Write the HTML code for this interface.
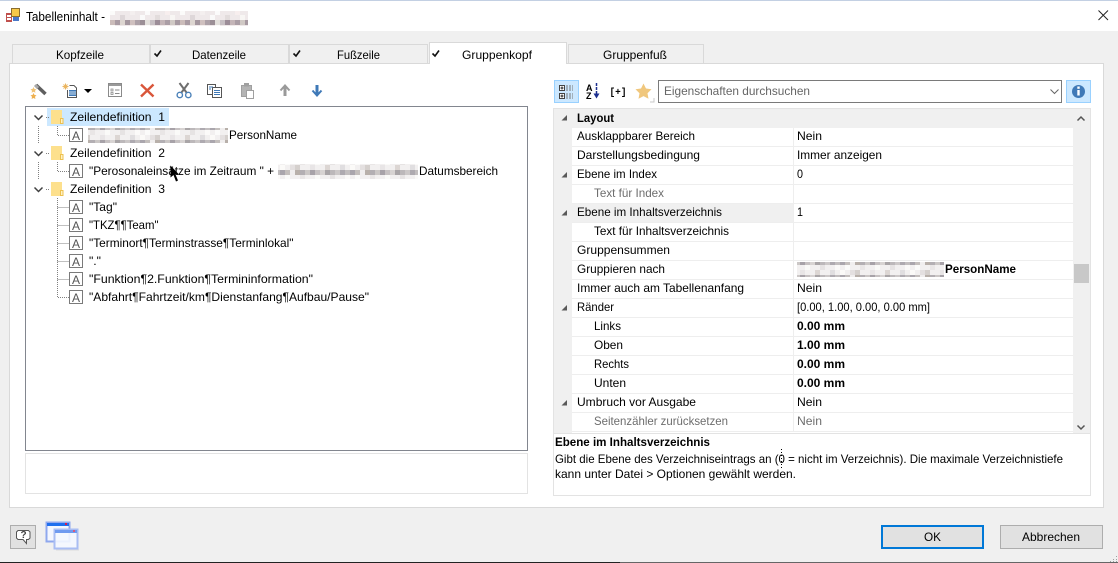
<!DOCTYPE html>
<html lang="de"><head><meta charset="utf-8"><title>Tabelleninhalt</title>
<style>
html,body{margin:0;padding:0;background:#f0f0f0;width:1118px;height:563px;overflow:hidden}
svg{display:block}
text{font-family:"Liberation Sans",sans-serif;font-size:12px;fill:#000}
.b{font-weight:bold}
.g{fill:#6d6d6d}
.t{font-size:13px}
</style></head><body>
<svg xmlns="http://www.w3.org/2000/svg" width="1118" height="563" viewBox="0 0 1118 563">
<defs>
<pattern id="mz" width="70" height="15" patternUnits="userSpaceOnUse">
<rect width="70" height="15" fill="#f2f0f0"/>
<rect x="0" y="0" width="5" height="5" fill="#fbfaf8"/><rect x="10" y="0" width="5" height="5" fill="#e4e0e0"/><rect x="15" y="0" width="5" height="5" fill="#d5d0cd"/><rect x="30" y="0" width="5" height="5" fill="#e8e5e6"/><rect x="45" y="0" width="5" height="5" fill="#dcd6d3"/><rect x="60" y="0" width="5" height="5" fill="#e0dee0"/>
<rect x="0" y="5" width="5" height="5" fill="#aaa6ad"/><rect x="5" y="5" width="5" height="5" fill="#c4bfbd"/><rect x="10" y="5" width="5" height="5" fill="#f0eeee"/><rect x="15" y="5" width="5" height="5" fill="#b8b0aa"/><rect x="20" y="5" width="5" height="5" fill="#b3afb3"/><rect x="25" y="5" width="5" height="5" fill="#cbc7c6"/><rect x="30" y="5" width="5" height="5" fill="#a7a2a8"/><rect x="35" y="5" width="5" height="5" fill="#c6c1c2"/><rect x="40" y="5" width="5" height="5" fill="#d7d3d2"/><rect x="45" y="5" width="5" height="5" fill="#a9a5a7"/><rect x="50" y="5" width="5" height="5" fill="#bcb8ba"/><rect x="55" y="5" width="5" height="5" fill="#ccc8c8"/><rect x="60" y="5" width="5" height="5" fill="#aeaab0"/><rect x="65" y="5" width="5" height="5" fill="#c2bebf"/>
<rect x="5" y="10" width="5" height="5" fill="#fbfbfa"/><rect x="20" y="10" width="5" height="5" fill="#e9e6e6"/><rect x="35" y="10" width="5" height="5" fill="#fafaf8"/><rect x="50" y="10" width="5" height="5" fill="#e6e3e3"/><rect x="65" y="10" width="5" height="5" fill="#fbfaf9"/>
</pattern>
<pattern id="mt" width="70" height="15" patternUnits="userSpaceOnUse">
<rect width="70" height="15" fill="#efe9ea"/>
<rect x="0" y="0" width="5" height="5" fill="#fafafa"/><rect x="15" y="0" width="5" height="5" fill="#e2dcdc"/><rect x="30" y="0" width="5" height="5" fill="#f8f6f4"/><rect x="50" y="0" width="5" height="5" fill="#ded7d9"/>
<rect x="0" y="5" width="5" height="5" fill="#9b8f96"/><rect x="5" y="5" width="5" height="5" fill="#e3e0dc"/><rect x="10" y="5" width="5" height="5" fill="#c7c0c4"/><rect x="15" y="5" width="5" height="5" fill="#9c8d98"/><rect x="20" y="5" width="5" height="5" fill="#c4b5b8"/><rect x="25" y="5" width="5" height="5" fill="#ab9ea6"/><rect x="30" y="5" width="5" height="5" fill="#d0c9c5"/><rect x="35" y="5" width="5" height="5" fill="#a79aa2"/><rect x="40" y="5" width="5" height="5" fill="#cbbcba"/><rect x="45" y="5" width="5" height="5" fill="#a99ba3"/><rect x="50" y="5" width="5" height="5" fill="#ddd6d1"/><rect x="55" y="5" width="5" height="5" fill="#a4979f"/><rect x="60" y="5" width="5" height="5" fill="#cfc0bf"/><rect x="65" y="5" width="5" height="5" fill="#ada1a8"/>
<rect x="5" y="10" width="5" height="5" fill="#fbfbfb"/><rect x="25" y="10" width="5" height="5" fill="#f7eeee"/><rect x="40" y="10" width="5" height="5" fill="#fbfbfa"/><rect x="60" y="10" width="5" height="5" fill="#f4efef"/>
</pattern>
</defs>

<!-- title bar -->
<rect width="1118" height="563" fill="#f0f0f0"/>
<rect width="1118" height="31" fill="#fff"/>
<rect width="1118" height="1" fill="#c3d0e3"/>
<rect x="6" y="13" width="6" height="9" fill="#c0504d"/><rect x="7" y="15" width="4" height="2" fill="#fff"/><rect x="7" y="18" width="4" height="2" fill="#fff"/>
<rect x="11.500" y="8.500" width="8" height="8" fill="#f7c948" stroke="#8a6d2f"/>
<rect x="13" y="17" width="6" height="4" fill="#4a78c8"/>
<text class="t" x="26" y="21" textLength="79" lengthAdjust="spacingAndGlyphs">Tabelleninhalt -</text>
<rect x="110" y="11" width="138" height="15" fill="url(#mt)"/>
<path d="M1098.500 10.500L1108 20M1108 10.500L1098.500 20" stroke="#222" stroke-width="1" fill="none"/>

<!-- tabs -->
<g fill="#f0f0f0" stroke="#d9d9d9">
<path d="M12.500 63V44.500H149.500V63"/><path d="M150.500 63V44.500H288.500V63"/><path d="M289.500 63V44.500H427.500V63"/><path d="M568.500 63V44.500H703.500V63"/>
</g>
<rect x="9.500" y="63.500" width="1094" height="444" fill="#fff" stroke="#d9d9d9"/>
<path d="M429.500 64V42.500H566.500V64" fill="#fff" stroke="#d9d9d9"/>
<rect x="430" y="62" width="136" height="3" fill="#fff"/>
<text x="56" y="59" textLength="48" lengthAdjust="spacingAndGlyphs">Kopfzeile</text>
<text x="192" y="59" textLength="54" lengthAdjust="spacingAndGlyphs">Datenzeile</text>
<text x="337" y="59" textLength="43" lengthAdjust="spacingAndGlyphs">Fußzeile</text>
<text x="462" y="59" textLength="70" lengthAdjust="spacingAndGlyphs">Gruppenkopf</text>
<text x="603" y="59" textLength="64" lengthAdjust="spacingAndGlyphs">Gruppenfuß</text>
<g fill="none" stroke="#111" stroke-width="1.600">
<path d="M154.500 53.500L157 56L161 50.500"/><path d="M293.500 53.500L296 56L300 50.500"/><path d="M432.500 53.500L435 56L439 50.500"/>
</g>

<!-- left toolbar -->
<path d="M36 85L45.500 94" stroke="#5f5f5f" stroke-width="3.500"/>
<path d="M35 85L38 88" stroke="#a8a8a8" stroke-width="3"/>
<path d="M33.500 87l1 2 2 .3-1.500 1.500.4 2-1.900-1-1.900 1 .4-2-1.500-1.500 2-.3z" fill="#f0c274"/>
<path d="M33.500 93l1 2 2 .3-1.500 1.500.4 2.200-1.900-1-1.900 1 .4-2.200-1.500-1.500 2-.3z" fill="#eeb04f"/>
<path d="M69.500 85.500H74L76.500 88V97.500H67.500V90" fill="#fff" stroke="#555"/>
<rect x="69" y="90" width="7" height="6" fill="#3f79b7"/>
<path d="M69 92H76M69 94H76" stroke="#fff" stroke-width=".7"/>
<path d="M65.500 83.500V89.500M62.500 86.500H68.500M63.500 84.500L67.500 88.500M67.500 84.500L63.500 88.500" stroke="#eab560" stroke-width="1"/>
<path d="M84 89H92L88 93z" fill="#000"/>
<rect x="108.500" y="83.500" width="13" height="13" fill="#fff" stroke="#8a8a8a"/>
<rect x="109" y="84" width="12" height="2" fill="#9a9a9a"/>
<path d="M111 89h2v2h-2zM111 92.500h2v2h-2z" fill="none" stroke="#8a8a8a" stroke-width=".8"/>
<path d="M115 90H119.500M115 93.500H119.500" stroke="#8a8a8a"/>
<path d="M141 84.500L153.500 96.500M153.500 84.500L141 96.500" stroke="#d9563a" stroke-width="2.400" fill="none"/>
<path d="M179.500 83L186.500 92.500M188.500 83L181.500 92.500" stroke="#6e6e6e" stroke-width="2" fill="none"/>
<circle cx="179.800" cy="95" r="2.700" fill="#fff" stroke="#4a80b8" stroke-width="1.400"/>
<circle cx="188.300" cy="95" r="2.700" fill="#fff" stroke="#4a80b8" stroke-width="1.400"/>
<rect x="207.500" y="84.500" width="8" height="10" fill="#fff" stroke="#555"/>
<rect x="212.500" y="87.500" width="9" height="10" fill="#fff" stroke="#555"/>
<path d="M209 87H213M209 89H211M214 90.500H220M214 92.500H220M214 94.500H220" stroke="#3f79b7"/>
<rect x="241.500" y="85.500" width="10" height="11" fill="#b4b4b4" stroke="#a0a0a0"/>
<rect x="244" y="83" width="5" height="3.500" fill="#a0a0a0"/>
<rect x="246.500" y="90.500" width="7" height="8" fill="#fff" stroke="#a0a0a0"/>
<path d="M285 86V96" stroke="#9a9a9a" stroke-width="3"/><path d="M280.500 90.500L285 85.500L289.500 90.500" stroke="#9a9a9a" stroke-width="2" fill="none"/>
<path d="M317 85V95" stroke="#3f79b7" stroke-width="3"/><path d="M312.500 90.500L317 95.500L321.500 90.500" stroke="#3f79b7" stroke-width="2" fill="none"/>

<!-- tree -->
<rect x="25.500" y="106.500" width="502" height="344" fill="#fff" stroke="#82868f"/>
<rect x="25.500" y="453.500" width="502" height="40" fill="#fff" stroke="#e3e3e3"/>
<rect x="47" y="108" width="122" height="18" fill="#cce8ff"/>
<g fill="none" stroke="#808080" stroke-dasharray="1 1">
<path d="M38.500 126V144M38.500 162V180M46 117.500H50M46 153.500H50M46 189.500H50"/>
<path d="M57.500 126V135.500H69M57.500 162V171.500H69M57.500 198V297.500H69M57.500 207.500H69M57.500 225.500H69M57.500 243.500H69M57.500 261.500H69M57.500 279.500H69"/>
</g>
<g fill="none" stroke="#404040" stroke-width="1.500">
<path d="M34.500 115.500L38.500 119.500L42.500 115.500"/><path d="M34.500 151.500L38.500 155.500L42.500 151.500"/><path d="M34.500 187.500L38.500 191.500L42.500 187.500"/>
</g>
<g fill="#fde08d">
<rect x="51" y="110" width="11" height="14"/><rect x="51" y="146" width="11" height="14"/><rect x="51" y="182" width="11" height="14"/>
</g>
<g fill="#fff2c4" stroke="#edc04f"><rect x="60.500" y="118.500" width="2.500" height="5"/><rect x="60.500" y="154.500" width="2.500" height="5"/><rect x="60.500" y="190.500" width="2.500" height="5"/></g>

<g fill="#fff" stroke="#7a7a7a">
<rect x="69.500" y="128.500" width="13" height="13"/><rect x="69.500" y="164.500" width="13" height="13"/><rect x="69.500" y="200.500" width="13" height="13"/><rect x="69.500" y="218.500" width="13" height="13"/><rect x="69.500" y="236.500" width="13" height="13"/><rect x="69.500" y="254.500" width="13" height="13"/><rect x="69.500" y="272.500" width="13" height="13"/><rect x="69.500" y="290.500" width="13" height="13"/>
</g>
<g>
<text x="72" y="140" style="fill:#555">A</text><text x="72" y="176" style="fill:#555">A</text><text x="72" y="212" style="fill:#555">A</text><text x="72" y="230" style="fill:#555">A</text><text x="72" y="248" style="fill:#555">A</text><text x="72" y="266" style="fill:#555">A</text><text x="72" y="284" style="fill:#555">A</text><text x="72" y="302" style="fill:#555">A</text>
</g>
<text x="70" y="121" textLength="95" lengthAdjust="spacingAndGlyphs">Zeilendefinition&#160;&#160;1</text>
<text x="70" y="157" textLength="95" lengthAdjust="spacingAndGlyphs">Zeilendefinition&#160;&#160;2</text>
<text x="70" y="193" textLength="95" lengthAdjust="spacingAndGlyphs">Zeilendefinition&#160;&#160;3</text>
<rect x="88" y="128" width="140" height="15" fill="url(#mz)"/>
<text x="229" y="139" textLength="68" lengthAdjust="spacingAndGlyphs">PersonName</text>
<text x="89" y="175" textLength="185" lengthAdjust="spacingAndGlyphs">"Perosonaleinsätze im Zeitraum " +</text>
<rect x="278" y="164" width="140" height="15" fill="url(#mz)"/>
<text x="419" y="175" textLength="79" lengthAdjust="spacingAndGlyphs">Datumsbereich</text>
<text x="89" y="211" textLength="28" lengthAdjust="spacingAndGlyphs">"Tag"</text>
<text x="89" y="229" textLength="69.500" lengthAdjust="spacingAndGlyphs">"TKZ¶¶Team"</text>
<text x="89" y="247" textLength="204.500" lengthAdjust="spacingAndGlyphs">"Terminort¶Terminstrasse¶Terminlokal"</text>
<text x="89" y="265" textLength="12" lengthAdjust="spacingAndGlyphs">"."</text>
<text x="89" y="283" textLength="224" lengthAdjust="spacingAndGlyphs">"Funktion¶2.Funktion¶Termininformation"</text>
<text x="89" y="301" textLength="280" lengthAdjust="spacingAndGlyphs">"Abfahrt¶Fahrtzeit/km¶Dienstanfang¶Aufbau/Pause"</text>
<path d="M170.500 165.500V177.500L173.500 175L176 181.500L178 180.500L175.500 174.500H179z" fill="#000"/>

<!-- right toolbar -->
<rect x="554.500" y="80.500" width="24" height="22" fill="#cce8ff" stroke="#99d1ff"/>
<g fill="#fff" stroke="#444"><rect x="559.500" y="85.500" width="5" height="5"/><rect x="559.500" y="93.500" width="5" height="5"/></g>
<path d="M560.500 88H563.500M562 86.500V89.500M560.500 96H563.500M562 94.500V97.500" stroke="#222"/>
<path d="M566 86H573M566 88H573M566 90H573M566 94H573M566 96H573M566 98H573" stroke="#777" stroke-dasharray="2 1"/>
<text x="586" y="91" style="font-size:9px;font-weight:bold">A</text>
<text x="586" y="99" style="font-size:9px;font-weight:bold">Z</text>
<path d="M596.500 83V95" stroke="#1c2f8f" stroke-width="1.500" stroke-dasharray="3 1"/><path d="M593.500 93.500H599.500L596.500 98.500z" fill="#1c2f8f"/>
<text x="609.500" y="95" textLength="17" lengthAdjust="spacingAndGlyphs" style="font-family:'Liberation Mono',monospace;font-size:10px;font-weight:bold">[+]</text>
<path d="M643.500 83.500l2.500 5 5.500.8-4 3.900 1 5.500-5-2.600-5 2.600 1-5.500-4-3.900 5.500-.8z" fill="#f0c77d"/>
<path d="M654 98V102H650" fill="none" stroke="#c8c8c8"/>
<rect x="658.500" y="80.500" width="403" height="22" fill="#fff" stroke="#7a7a7a"/>
<text class="g" x="664" y="95" textLength="146" lengthAdjust="spacingAndGlyphs" style="fill:#666">Eigenschaften durchsuchen</text>
<path d="M1050.500 89.500L1054.500 93.500L1058.500 89.500" fill="none" stroke="#666"/>
<rect x="1066.500" y="80.500" width="24" height="22" fill="#cce8ff" stroke="#99d1ff"/>
<circle cx="1078.500" cy="91.500" r="6.500" fill="#3f79b7"/>
<rect x="1077.300" y="86.500" width="2.400" height="2.300" fill="#fff"/><rect x="1077.300" y="90" width="2.400" height="5.500" fill="#fff"/>

<!-- property grid -->
<rect x="553.500" y="108.500" width="537" height="325" fill="#fff" stroke="#e3e3e3"/>
<rect x="554" y="109" width="18" height="324" fill="#f0f0f0"/>
<rect x="554" y="109" width="519" height="19" fill="#f0f0f0"/>
<rect x="572" y="203" width="221" height="19" fill="#f0f0f0"/>
<rect x="1073" y="109" width="17" height="324" fill="#f0f0f0"/>
<rect x="1074" y="264" width="15" height="19" fill="#c8c8c8"/>
<path d="M1077.500 120.500L1081 117L1084.500 120.500M1077.500 425.500L1081 429L1084.500 425.500" fill="none" stroke="#555" stroke-width="1.500"/>
<path d="M572 146.500H1073M572 165.500H1073M572 184.500H1073M572 203.500H1073M572 222.500H1073M572 241.500H1073M572 260.500H1073M572 279.500H1073M572 298.500H1073M572 317.500H1073M572 336.500H1073M572 355.500H1073M572 374.500H1073M572 393.500H1073M572 412.500H1073M572 431.500H1073" stroke="#eee" fill="none"/>
<path d="M793.500 128V432" stroke="#eee"/>
<g fill="#595959">
<path d="M567 115V120.500H561.500z"/><path d="M567 172V177.500H561.500z"/><path d="M567 210V215.500H561.500z"/><path d="M567 305V310.500H561.500z"/><path d="M567 400V405.500H561.500z"/>
</g>
<text class="b" x="577" y="122" textLength="37" lengthAdjust="spacingAndGlyphs">Layout</text>
<text x="577" y="140" textLength="118" lengthAdjust="spacingAndGlyphs">Ausklappbarer Bereich</text>
<text x="577" y="159" textLength="123" lengthAdjust="spacingAndGlyphs">Darstellungsbedingung</text>
<text x="577" y="178" textLength="80" lengthAdjust="spacingAndGlyphs">Ebene im Index</text>
<text class="g" x="594" y="197" textLength="70" lengthAdjust="spacingAndGlyphs">Text für Index</text>
<text x="577" y="216" textLength="145" lengthAdjust="spacingAndGlyphs">Ebene im Inhaltsverzeichnis</text>
<text x="594" y="235" textLength="135" lengthAdjust="spacingAndGlyphs">Text für Inhaltsverzeichnis</text>
<text x="577" y="254" textLength="93" lengthAdjust="spacingAndGlyphs">Gruppensummen</text>
<text x="577" y="273" textLength="88" lengthAdjust="spacingAndGlyphs">Gruppieren nach</text>
<text x="577" y="292" textLength="167" lengthAdjust="spacingAndGlyphs">Immer auch am Tabellenanfang</text>
<text x="577" y="311" textLength="37" lengthAdjust="spacingAndGlyphs">Ränder</text>
<text x="594" y="330" textLength="27" lengthAdjust="spacingAndGlyphs">Links</text>
<text x="594" y="349" textLength="29" lengthAdjust="spacingAndGlyphs">Oben</text>
<text x="594" y="368" textLength="35" lengthAdjust="spacingAndGlyphs">Rechts</text>
<text x="594" y="387" textLength="32" lengthAdjust="spacingAndGlyphs">Unten</text>
<text x="577" y="406" textLength="119" lengthAdjust="spacingAndGlyphs">Umbruch vor Ausgabe</text>
<text class="g" x="594" y="425" textLength="134" lengthAdjust="spacingAndGlyphs">Seitenzähler zurücksetzen</text>

<text x="797" y="140" textLength="25" lengthAdjust="spacingAndGlyphs">Nein</text>
<text x="797" y="159" textLength="85" lengthAdjust="spacingAndGlyphs">Immer anzeigen</text>
<text x="797" y="178" textLength="6" lengthAdjust="spacingAndGlyphs">0</text>
<text x="797" y="216" textLength="6" lengthAdjust="spacingAndGlyphs">1</text>
<rect x="797" y="262" width="147" height="15" fill="url(#mz)"/>
<text class="b" x="945" y="273" textLength="71" lengthAdjust="spacingAndGlyphs">PersonName</text>
<text x="797" y="292" textLength="25" lengthAdjust="spacingAndGlyphs">Nein</text>
<text x="797" y="311" textLength="133" lengthAdjust="spacingAndGlyphs">[0.00, 1.00, 0.00, 0.00 mm]</text>
<text class="b" x="797" y="330" textLength="48" lengthAdjust="spacingAndGlyphs">0.00 mm</text>
<text class="b" x="797" y="349" textLength="48" lengthAdjust="spacingAndGlyphs">1.00 mm</text>
<text class="b" x="797" y="368" textLength="48" lengthAdjust="spacingAndGlyphs">0.00 mm</text>
<text class="b" x="797" y="387" textLength="48" lengthAdjust="spacingAndGlyphs">0.00 mm</text>
<text x="797" y="406" textLength="25" lengthAdjust="spacingAndGlyphs">Nein</text>
<text class="g" x="797" y="425" textLength="25" lengthAdjust="spacingAndGlyphs">Nein</text>

<!-- help pane -->
<rect x="553.500" y="433.500" width="537" height="62" fill="#fff" stroke="#e3e3e3"/>
<text class="b" x="555" y="446" textLength="155" lengthAdjust="spacingAndGlyphs">Ebene im Inhaltsverzeichnis</text>
<text x="555" y="463" textLength="508" lengthAdjust="spacingAndGlyphs">Gibt die Ebene des Verzeichniseintrags an (0 = nicht im Verzeichnis). Die maximale Verzeichnistiefe</text>
<text x="555" y="478" textLength="241" lengthAdjust="spacingAndGlyphs">kann unter Datei &gt; Optionen gewählt werden.</text>
<path d="M781.500 449V468" stroke="#000" stroke-dasharray="1 2"/>

<!-- footer -->
<rect x="10.500" y="525.500" width="25" height="23" fill="#e1e1e1" stroke="#adadad"/>
<path d="M18 530.500H28.500L30 532V538L28.500 539.500H26.500V543.500L23 539.500H18L16.500 538V532z" fill="#fff" stroke="#555"/>
<text x="20.500" y="538" style="font-size:10px;font-weight:bold;fill:#444">?</text>
<rect x="46.500" y="522.500" width="23" height="19" fill="#f4f7ff" stroke="#8fa8ee" stroke-width="2"/>
<rect x="47" y="523" width="22" height="3" fill="#1f6fee"/>
<rect x="65" y="523" width="2" height="2" fill="#d81b50"/>
<rect x="54.500" y="529.500" width="23" height="19" fill="#f4f7ff" fill-opacity=".9" stroke="#a9bdf3" stroke-width="2"/>
<rect x="55" y="530" width="22" height="3" fill="#6f9bf0"/>
<rect x="73" y="530" width="2" height="2" fill="#d85a80"/>
<rect x="56" y="549.500" width="23" height="1" fill="#dcdcdc"/>

<rect x="882" y="526" width="101" height="22" fill="#e1e1e1" stroke="#0078d7" stroke-width="2"/>
<text x="924" y="541" textLength="17" lengthAdjust="spacingAndGlyphs">OK</text>
<rect x="1000.500" y="525.500" width="102" height="23" fill="#e1e1e1" stroke="#adadad"/>
<text x="1022" y="541" textLength="58" lengthAdjust="spacingAndGlyphs">Abbrechen</text>
<path d="M1116 556h1v1h-1zM1113 559h1v1h-1zM1116 559h1v1h-1zM1110 561h1v1h-1zM1113 561h1v1h-1zM1116 561h1v1h-1z" fill="#a0a0a0"/>
<rect x="0" y="562" width="620" height="1" fill="#222"/>
<rect x="620" y="562" width="498" height="1" fill="#666"/>
</svg>
</body></html>
